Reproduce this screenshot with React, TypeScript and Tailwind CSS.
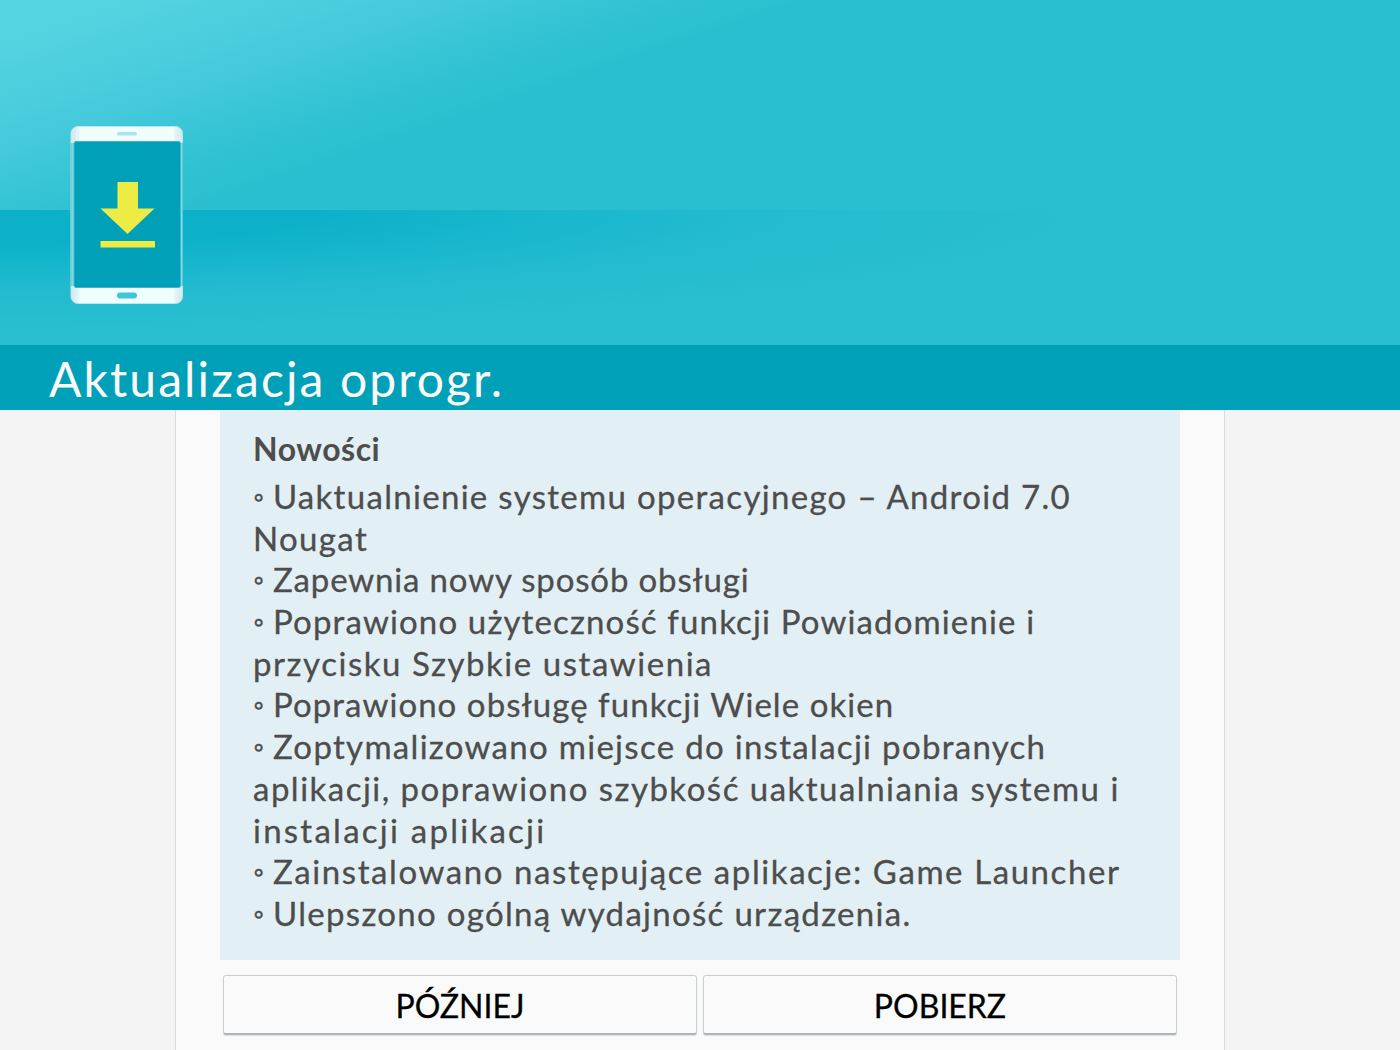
type NoteLine = { text: string; bullet?: boolean; tracking: string };

// One entry per visual line of the change log
const NOTES: NoteLine[] = [
  { text: 'Uaktualnienie systemu operacyjnego – Android 7.0', bullet: true, tracking: 'tracking-[1.31px]' },
  { text: 'Nougat', tracking: 'tracking-[1.35px]' },
  { text: 'Zapewnia nowy sposób obsługi', bullet: true, tracking: 'tracking-[0.84px]' },
  { text: 'Poprawiono użyteczność funkcji Powiadomienie i', bullet: true, tracking: 'tracking-[1.14px]' },
  { text: 'przycisku Szybkie ustawienia', tracking: 'tracking-[1.55px]' },
  { text: 'Poprawiono obsługę funkcji Wiele okien', bullet: true, tracking: 'tracking-[1.05px]' },
  { text: 'Zoptymalizowano miejsce do instalacji pobranych', bullet: true, tracking: 'tracking-[1.3px]' },
  { text: 'aplikacji, poprawiono szybkość uaktualniania systemu i', tracking: 'tracking-[1.48px]' },
  { text: 'instalacji aplikacji', tracking: 'tracking-[2.25px]' },
  { text: 'Zainstalowano następujące aplikacje: Game Launcher', bullet: true, tracking: 'tracking-[1.58px]' },
  { text: 'Ulepszono ogólną wydajność urządzenia.', bullet: true, tracking: 'tracking-[1.3px]' },
];

function PhoneIcon() {
  return (
    <svg width="114" height="179" viewBox="0 0 114 179" className="block">
      <defs>
        <linearGradient id="body" x1="0" x2="1" y1="0" y2="0">
          <stop offset="0" stopColor="#d3e8ee" />
          <stop offset="0.07" stopColor="#e6f4f7" />
          <stop offset="0.08" stopColor="#f0feff" />
          <stop offset="0.92" stopColor="#f0feff" />
          <stop offset="0.93" stopColor="#e6f4f7" />
          <stop offset="1" stopColor="#d3e8ee" />
        </linearGradient>
      </defs>
      <rect x="1" y="0.5" width="111.5" height="177" rx="7" fill="url(#body)" stroke="#b5e9f0" />
      <rect x="1" y="17" width="111.5" height="143" fill="#86d7e3" />
      <path d="M1 17V160M112.500 17V160" stroke="#5ccbd9" />
      <rect x="4" y="15.500" width="106.500" height="146" rx="2" fill="#00a0b8" stroke="#3bb8ca" />
      <rect x="47" y="6" width="20" height="3.500" rx="1.500" fill="#abe4eb" />
      <rect x="47" y="166.500" width="20" height="6" rx="3" fill="#3cc6d8" />
      <path d="M47.500 56H68V82.500H84.500L57.500 108L30.500 82.500H47.500Z" fill="#edec45" />
      <rect x="30.500" y="115" width="54.500" height="6.500" fill="#edec45" />
    </svg>
  );
}

function Header() {
  return (
    <header>
      <div className="relative h-[345px] bg-[#2abfd0]">
        {/* light beam above the horizon, shadow below it */}
        <div className="h-[210px] bg-[linear-gradient(161.4deg,#57d4e1_0px,#55d3e1_40px,#45cadb_140px,#32c3d4_205px,#2abfd0_258px)]" />
        <div className="h-[135px] bg-[radial-gradient(1150px_126px_at_0px_0px,#0cb1c9_0%,#0cb1c9_28%,#1ab8cd_50%,#24bbd0_68%,#28bdd1_88%,#2abfd0_100%)]" />
        <div className="absolute left-[70px] top-[126px]">
          <PhoneIcon />
        </div>
      </div>
      <div className="h-[65px] overflow-hidden border-t border-[#00a0b8] bg-[#00a0b8] pl-[49px]">
        <h1 className="whitespace-nowrap pt-[5px] text-[48px] leading-[56px] tracking-[2.1px] text-[#fafafa]">
          Aktualizacja oprogr.
        </h1>
      </div>
    </header>
  );
}

function ActionButton({ label }: { label: string }) {
  return (
    <button className="h-[60px] flex-1 rounded-[3px] border border-[#c9d0d4] border-b-2 border-b-[#adb5ba] bg-[#fafafa] pt-[3px] text-[32px] leading-none text-black shadow-[0_1px_1px_#dcdfe1] [-webkit-text-stroke:0.3px]">
      {label}
    </button>
  );
}

export default function App() {
  return (
    <div className="flex h-[1050px] w-[1400px] flex-col overflow-hidden bg-[#f4f4f4] font-['Lato',sans-serif]">
      <Header />
      <main className="mx-auto w-[1050px] flex-1 border-x border-[#d9dadb] bg-[#fafafa] px-11">
        <section className="h-[550px] bg-[#e2f0f5] pl-[33px] pt-[18px] text-[33px] text-[#4d4d4d]">
          <h2 className="h-12 text-[32px] font-bold leading-[41.7px] tracking-[0.5px]">Nowości</h2>
          {NOTES.map((line) => (
            <p key={line.text} className={`flex h-[41.7px] whitespace-nowrap leading-[41.7px] [-webkit-text-stroke:0.3px] ${line.tracking}`}>
              {line.bullet && <span className="w-5 shrink-0 text-[28px] tracking-normal">◦</span>}
              <span>{line.text}</span>
            </p>
          ))}
        </section>
        <div className="mt-[15px] flex gap-[6px] px-[3px]">
          <ActionButton label="PÓŹNIEJ" />
          <ActionButton label="POBIERZ" />
        </div>
      </main>
    </div>
  );
}
